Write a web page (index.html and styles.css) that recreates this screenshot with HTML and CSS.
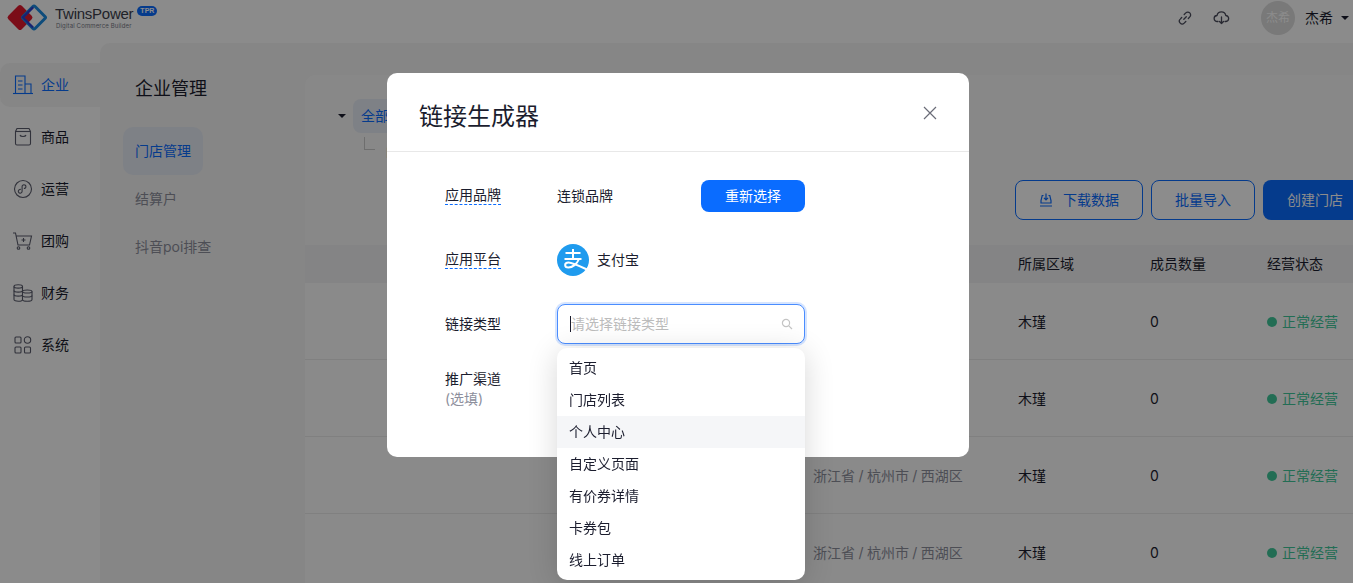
FILE: index.html
```html
<!DOCTYPE html>
<html lang="zh-CN">
<head>
<meta charset="utf-8">
<title>链接生成器</title>
<link rel="stylesheet" href="styles.css">
</head>
<body>
<div class="app">
  <header class="topbar">
    <div class="brand">
      <svg class="logo" width="41" height="30" viewBox="0 0 41 30">
        <rect x="4.500" y="5" width="19" height="19" rx="2.500" transform="rotate(45 14 14.500)" fill="#e0182d"/>
        <rect x="19.500" y="6" width="17" height="17" rx="1.500" transform="rotate(45 28 14.500)" fill="none" stroke="#1a8ae0" stroke-width="3"/>
        <path d="M26.500 3.500 28 5 18.500 14.500 25 21l2.800 2.800-1.500 1.500-11-11z" fill="#2d3fd0"/>
      </svg>
      <div class="brand-text">
        <div class="brand-name">TwinsPower<span class="brand-tag">TPR</span></div>
        <div class="brand-sub">Digital Commerce Builder</div>
      </div>
    </div>
    <div class="top-actions">
      <svg class="top-icon" width="16" height="16" viewBox="0 0 16 16" fill="none" stroke="#4a4c5c" stroke-width="1.300" stroke-linecap="round"><path d="M6.800 9.200 9.300 6.700"/><path d="M7.200 4.500 8.800 2.900a2.800 2.800 0 0 1 4 4l-1.500 1.600"/><path d="M8.800 11.500 7.200 13.100a2.800 2.800 0 0 1-4-4l1.500-1.600"/></svg>
      <svg class="top-icon cloud" width="17" height="16" viewBox="0 0 17 16" fill="none" stroke="#4a4c5c" stroke-width="1.300" stroke-linecap="round" stroke-linejoin="round"><path d="M5 11.500H4.300a3 3 0 0 1-.3-6 4.500 4.500 0 0 1 8.800 0 3 3 0 0 1-.3 6H12"/><path d="M8.500 7v6.500M6.500 11.500l2 2 2-2"/></svg>
      <div class="avatar">杰希</div>
      <span class="user-name">杰希</span>
      <span class="caret"></span>
    </div>
  </header>
  <div class="workspace">
    <nav class="sidebar">
      <a class="side-item active">
        <svg width="20" height="20" viewBox="0 0 20 20" fill="none" stroke="currentColor" stroke-width="1.100"><path d="M0 18.500h20"/><path d="M2.500 18V1h9.500v17"/><path d="M12 9h6v9"/><path d="M5 6h4.500M5 10h4.500M5 14h4.500"/></svg>
        <span>企业</span>
      </a>
      <a class="side-item">
        <svg width="20" height="20" viewBox="0 0 20 20" fill="none" stroke="#5a5c6c" stroke-width="1.100"><path d="M4 1.500h12l1.500 3v12a1.500 1.500 0 0 1-1.500 1.500H4a1.500 1.500 0 0 1-1.500-1.500v-12z"/><path d="M2.500 4.500h15"/><path d="M7 8c.5 2 5.500 2 6 0"/></svg>
        <span>商品</span>
      </a>
      <a class="side-item">
        <svg width="20" height="20" viewBox="0 0 20 20" fill="none" stroke="#5a5c6c" stroke-width="1.100"><circle cx="10" cy="10" r="8.500"/><path d="M7.800 10.500a1.900 1.900 0 1 0 1.300 1.800V7.700a1.900 1.900 0 1 1 1.800 1.800"/></svg>
        <span>运营</span>
      </a>
      <a class="side-item">
        <svg width="20" height="20" viewBox="0 0 20 20" fill="none" stroke="#5a5c6c" stroke-width="1.100"><path d="M0 2h2.500L5 14h11.500L18.500 5H3.200"/><path d="M10.500 7v4M8.500 9h4"/><circle cx="5.500" cy="17" r="1.300"/><circle cx="15.500" cy="17" r="1.300"/></svg>
        <span>团购</span>
      </a>
      <a class="side-item">
        <svg width="20" height="20" viewBox="0 0 20 20" fill="none" stroke="#5a5c6c" stroke-width="1.100"><path d="M1 3.500c0-2.400 8.500-2.400 8.500 0v13c0 2.400-8.500 2.400-8.500 0z"/><path d="M1 3.500c0 2.200 8.500 2.200 8.500 0M1 7.500c0 2.200 8.500 2.200 8.500 0M1 11.500c0 2.200 8.500 2.200 8.500 0"/><path d="M9.500 8.500c0-2 9.500-2 9.500 0v8c0 2.300-9.500 2.300-9.500 0"/><path d="M9.500 8.500c0 2 9.500 2 9.500 0M9.500 12.500c0 2 9.500 2 9.500 0"/></svg>
        <span>财务</span>
      </a>
      <a class="side-item">
        <svg width="20" height="20" viewBox="0 0 20 20" fill="none" stroke="#5a5c6c" stroke-width="1.100"><rect x="2" y="2" width="6" height="6" rx="1"/><circle cx="14.500" cy="5" r="3.200"/><rect x="2" y="12" width="6" height="6" rx="1"/><rect x="11.500" y="12" width="6" height="6" rx="1"/></svg>
        <span>系统</span>
      </a>
    </nav>
    <div class="content">
      <aside class="subnav">
        <h2 class="subnav-title">企业管理</h2>
        <a class="subnav-item active">门店管理</a>
        <a class="subnav-item">结算户</a>
        <a class="subnav-item">抖音poi排查</a>
      </aside>
      <main class="panel">
        <div class="tree">
          <div class="tree-root"><span class="tree-caret"></span><span class="tree-pill">全部门店</span></div>
          <div class="tree-leaf"><span class="tree-line"></span><span class="tree-label">门店</span></div>
        </div>
        <div class="toolbar">
          <button class="btn outline dl">
            <svg width="14" height="14" viewBox="0 0 14 14" fill="none" stroke="currentColor" stroke-width="1.200"><path d="M4.500 2.500H3.200L2 7.500V10h10V7.500L10.800 2.500H9.500"/><path d="M7 .5v6M5 4.800l2 2 2-2"/><path d="M1 13h12"/></svg>
            <span>下载数据</span>
          </button>
          <button class="btn outline imp">批量导入</button>
          <button class="btn primary create">创建门店</button>
        </div>
        <div class="table">
          <div class="tr head"><span></span><span>所属区域</span><span>成员数量</span><span>经营状态</span></div>
          <div class="tr"><span class="c-addr">浙江省 / 杭州市 / 西湖区</span><span>木瑾</span><span>0</span><span class="ok">正常经营</span></div>
          <div class="tr"><span class="c-addr">浙江省 / 杭州市 / 西湖区</span><span>木瑾</span><span>0</span><span class="ok">正常经营</span></div>
          <div class="tr"><span class="c-addr">浙江省 / 杭州市 / 西湖区</span><span>木瑾</span><span>0</span><span class="ok">正常经营</span></div>
          <div class="tr"><span class="c-addr">浙江省 / 杭州市 / 西湖区</span><span>木瑾</span><span>0</span><span class="ok">正常经营</span></div>
        </div>
      </main>
    </div>
  </div>
</div>

<div class="overlay"></div>

<section class="modal">
  <header class="modal-head">
    <h1>链接生成器</h1>
    <svg class="close" width="14" height="14" viewBox="0 0 14 14" fill="none" stroke="#6a6c78" stroke-width="1.200"><path d="M1 1l12 12M13 1 1 13"/></svg>
  </header>
  <div class="form">
    <div class="row r-brand">
      <span class="label"><span class="dash">应用品牌</span></span>
      <span class="value v-brand">连锁品牌</span>
      <button class="btn primary again">重新选择</button>
    </div>
    <div class="row r-plat">
      <span class="label"><span class="dash">应用平台</span></span>
      <svg class="alipay" width="32" height="32" viewBox="0 0 32 32">
        <circle cx="16" cy="16" r="16" fill="#1f9bee"/>
        <g fill="none" stroke="#fff" stroke-width="2">
          <path d="M8.500 9h15M16 5v10M7.500 15h17"/>
          <path d="M22 15c-2 5-6.500 8.500-10.500 8.500-4.500 0-4.500-5 0-5 3.500 0 10 3 18.500 7"/>
        </g>
      </svg>
      <span class="value">支付宝</span>
    </div>
    <div class="row r-type">
      <span class="label">链接类型</span>
      <div class="select">
        <div class="input">
          <span class="cursor"></span><span class="ph">请选择链接类型</span>
          <svg class="search" width="12" height="12" viewBox="0 0 12 12" fill="none" stroke="#c4c4c4" stroke-width="1.200"><circle cx="5" cy="5" r="3.600"/><path d="M7.800 7.800 11 11"/></svg>
        </div>
        <ul class="menu">
          <li>首页</li>
          <li>门店列表</li>
          <li class="hover">个人中心</li>
          <li>自定义页面</li>
          <li>有价券详情</li>
          <li>卡券包</li>
          <li>线上订单</li>
        </ul>
      </div>
    </div>
    <div class="row r-chan">
      <span class="label">推广渠道<br><em>(选填)</em></span>
    </div>
  </div>
</section>
</body>
</html>
```
FILE: styles.css
```css
* { box-sizing: border-box; }
html, body { margin: 0; height: 100%; overflow: hidden; }
body {
  font-family: Inter, "Noto Sans CJK SC", sans-serif;
  font-size: 14px;
  line-height: 20px;
  color: #1b1d2e;
  background: #fff;
}
ul { margin: 0; padding: 0; list-style: none; }
h1, h2 { margin: 0; font-weight: 400; }

.app { height: 583px; display: flex; flex-direction: column; overflow: hidden; background: #fdfdfd; }

/* top bar */
.topbar { height: 43px; flex: none; display: flex; align-items: flex-start; justify-content: space-between; }
.brand { display: flex; padding: 3px 0 0 6px; }
.logo { display: block; }
.brand-text { margin-left: 8px; padding-top: 1px; }
.brand-name { font-family: "Liberation Sans", Arial, sans-serif; font-size: 15px; letter-spacing: -.25px; line-height: 20px; color: #3c3e4c; display: flex; }
.brand-tag { height: 10px; margin: 2px 0 0 4px; padding: 0 3px; border-radius: 5px; background: #0a6cff; color: #fff; font-size: 7px; letter-spacing: 0; line-height: 10px; font-weight: 700; }
.brand-sub { font-size: 6px; line-height: 6px; margin-top: -1px; padding-left: 1px; color: #777986; letter-spacing: .15px; }
.top-actions { display: flex; align-items: center; height: 36px; }
.top-icon { display: block; margin-right: 20px; }
.top-icon.cloud { margin-right: 31px; }
.avatar { width: 34px; height: 34px; border-radius: 50%; background: #dcdcdc; color: #fff; font-size: 12px; line-height: 34px; text-align: center; }
.user-name { margin-left: 10px; }
.caret { width: 0; height: 0; margin: 0 4px 0 8px; border: 4px solid transparent; border-top-color: #1b1d2e; border-bottom: 0; }

/* workspace */
.workspace { flex: 1; display: flex; min-height: 0; }
.sidebar { width: 100px; flex: none; padding-top: 20px; display: flex; flex-direction: column; gap: 8px; }
.side-item { height: 44px; display: flex; align-items: center; gap: 8px; padding-left: 13px; color: #1b1d2e; }
.side-item svg { display: block; flex: none; }
.side-item.active { background: #f4f4f4; color: #0a6cff; border-radius: 10px 0 0 10px; }

.content { flex: 1; min-width: 0; display: flex; background: #f4f4f4; border-radius: 10px 0 0 0; }
.subnav { width: 205px; flex: none; padding: 33px 0 0 23px; }
.subnav-title { font-size: 18px; line-height: 26px; padding-left: 12px; }
.subnav-item { display: block; width: 80px; height: 48px; padding-left: 12px; line-height: 48px; color: #8d8f9c; white-space: nowrap; border-radius: 10px; }
.subnav-title + .subnav-item { margin-top: 25px; }
.subnav-item.active { background: #e6ebf4; color: #0a6cff; }

.panel { flex: 1; min-width: 0; margin-top: 32px; background: #f8f8f8; border-radius: 10px 0 0 0; overflow: hidden; }

.tree { height: 105px; padding: 24px 0 0 33px; overflow: hidden; }
.tree-root { display: flex; align-items: center; height: 34px; }
.tree-caret { width: 0; height: 0; border: 4px solid transparent; border-top-color: #1b1d2e; border-bottom: 0; }
.tree-pill { margin-left: 7px; padding: 0 8px; height: 34px; line-height: 34px; border-radius: 8px; background: #e6ebf4; color: #0a6cff; }
.tree-leaf { display: flex; gap: 11px; padding: 4px 0 0 26px; }
.tree-line { display: block; width: 11px; height: 13px; border-left: 1px solid #c9c9c9; border-bottom: 1px solid #c9c9c9; }
.tree-label { line-height: 28px; }

.btn { font: inherit; border-radius: 8px; height: 40px; cursor: pointer; display: flex; align-items: center; justify-content: center; padding: 0; }
.btn.outline { background: #fff; color: #0a6cff; border: 1px solid #0a6cff; }
.btn.primary { background: #0a6cff; color: #fff; border: 0; }
.toolbar { display: flex; gap: 8px; padding-left: 710px; width: 1068px; }
.toolbar .dl { width: 128px; gap: 10px; }
.toolbar .imp { width: 104px; }
.toolbar .create { width: 104px; flex: none; }

.table { margin-top: 25px; width: 1048px; }
.tr { display: grid; grid-template-columns: 508px 205px 132px 117px 86px; padding-top: 1px; height: 77px; align-items: center; background: #fbfbfb; border-bottom: 1px solid #e9e9e9; white-space: nowrap; }
.tr::before { content: ""; }
.tr.head { height: 38px; padding-top: 0; background: #f0f0f3; border-bottom: 0; }
.c-addr { color: #8d8f9c; word-spacing: -.5px; }
.ok { color: #3fc79a; display: flex; align-items: center; gap: 5px; }
.ok::before { content: ""; width: 10px; height: 10px; flex: none; border-radius: 50%; background: #3fc79a; }

/* overlay + modal */
.overlay { position: fixed; inset: 0; background: rgba(0, 0, 0, .45); }
.modal { position: fixed; left: 387px; top: 73px; width: 582px; height: 384px; background: #fff; border-radius: 10px; }
.modal-head { height: 79px; border-bottom: 1px solid #e8e8e8; display: flex; align-items: flex-start; justify-content: space-between; padding: 27px 32px 0 32px; }
.modal-head h1 { font-size: 24px; line-height: 34px; }
.close { margin: 6px 0 0 0; display: block; }

.form { padding: 28px 0 0 58px; }
.row { display: flex; align-items: center; }
.label { width: 112px; flex: none; }
.dash { display: inline-block; line-height: 18px; vertical-align: top; border-bottom: 1px dashed #0a6cff; }
.r-brand { height: 32px; }
.v-brand { width: 144px; }
.again { width: 104px; height: 32px; }
.r-plat { height: 32px; margin-top: 32px; }
.alipay { display: block; margin-right: 8px; }
.r-type { height: 40px; margin-top: 28px; }
.select { position: relative; width: 248px; }
.input { height: 40px; border: 1px solid #4a8dff; border-radius: 8px; box-shadow: 0 0 0 2px #d6e5ff; display: flex; align-items: center; padding-left: 12px; background: #fff; }
.cursor { width: 1px; height: 16px; background: #1b1d2e; }
.ph { color: #bcbcbc; }
.search { position: absolute; right: 12px; top: 14px; }
.menu { position: absolute; left: 0; top: 44px; width: 248px; padding: 4px 0; background: #fff; border-radius: 10px; box-shadow: 0 4px 30px rgba(0, 0, 0, .16); z-index: 2; }
.menu li { height: 32px; line-height: 32px; padding-left: 12px; }
.menu li.hover { background: #f5f6f8; }
.r-chan { margin-top: 25px; }
.r-chan em { font-style: normal; color: #8d8f9c; }
```
